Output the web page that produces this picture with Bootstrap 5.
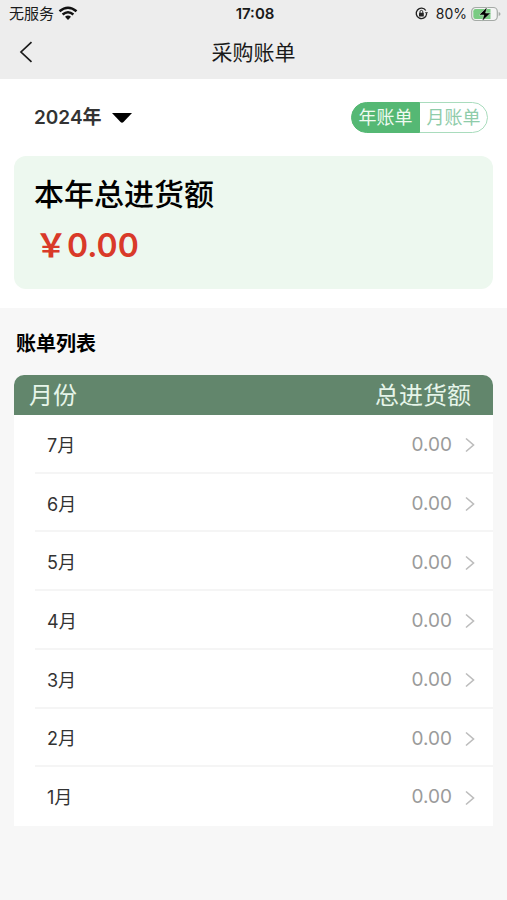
<!DOCTYPE html>
<html lang="zh-CN">
<head>
<meta charset="utf-8">
<meta name="viewport" content="width=device-width, initial-scale=1">
<title>采购账单</title>
<link href="https://cdn.jsdelivr.net/npm/bootstrap@5.3.0/dist/css/bootstrap.min.css" rel="stylesheet">
<style>
  body { font-family: Inter, "Noto Sans CJK SC", sans-serif; background: #f7f7f7; color: #000; }
  .topbar { background: #ededed; color: #1a1a1a; }
  .status { height: 27px; font-size: 14px; line-height: 27px; padding: 0 6px 0 9px; }
  .carrier, .clock { font-size: 15px; }
  .titlebar { height: 52px; padding: 0 18px; }
  .titlebar h1 { font-size: 21px; line-height: 50px; font-weight: 400; }
  .side { flex: 1 1 0; }
  .summary { padding: 23px 14px 19px; }
  .filters { padding: 0 5px 0 20px; margin-bottom: 23px; }
  .year {
    width: auto; padding: 1px 30px 0 0; border: 0; font-size: 19px; line-height: 30px; font-weight: 600; color: #333; background-color: transparent;
    background-image: url("data:image/svg+xml,%3Csvg xmlns='http://www.w3.org/2000/svg' viewBox='0 0 20 10'%3E%3Cpath d='M0 0h20l-8.5 9q-1.500 1.500-3 0z'/%3E%3C/svg%3E");
    background-size: 20px 10px; background-position: right center;
  }
  .switcher .btn {
    --bs-btn-color: #8fccaa; --bs-btn-border-color: #a9dcbd; --bs-btn-active-bg: #55b874; --bs-btn-active-border-color: #55b874; --bs-btn-active-color: #effaf1;
    width: 69px; padding: 0; font-size: 18px; line-height: 29px; font-weight: 400;
  }
  .total { background: #edf8ef; border-radius: 12px; padding: 16px 20px 19px; }
  .total h2 { font-size: 30px; line-height: 44px; font-weight: 500; }
  .total p { font-size: 32px; line-height: 48px; font-weight: 600; color: #d93a29; padding: 6px 0 0 1px; }
  .bills { padding: 21px 14px; }
  .bills h2 { font-size: 20px; line-height: 30px; font-weight: 600; padding-left: 2px; margin-bottom: 16px; }
  .bill-table { height: 451px; background: #fff; border-radius: 10px 10px 0 0; overflow: hidden; }
  .bill-table thead th { height: 40px; background: #62866c; color: #e6f5e9; font-size: 24px; line-height: 38px; font-weight: 400; padding: 2px 22px 0 15px; }
  .bill-table tbody th { font-size: 18px; font-weight: 400; color: #333; padding: 2px 0 0 33px; }
  .bill-table tbody td { padding: 2px 17px 0 0; }
  .bill-table tbody tr:not(:last-child) > * { background: linear-gradient(#f5f5f5, #f5f5f5) right bottom / 100% 2px no-repeat; }
  .bill-table tbody tr:not(:last-child) > th { background-size: calc(100% - 21px) 2px; }
  .amount { gap: 12px; font-size: 19px; color: #9b9b9b; }
</style>
<script src="https://cdn.jsdelivr.net/npm/bootstrap@5.3.0/dist/js/bootstrap.bundle.min.js"></script>
</head>
<body>
<header class="topbar">
  <div class="status d-flex align-items-center">
    <div class="side d-flex align-items-center gap-1">
      <span class="carrier">无服务</span>
      <svg width="20" height="15" viewBox="0 0 20 15" fill="none" stroke="#111" stroke-width="2.500" aria-hidden="true"><path d="M1.500 5.300Q10-1.800 18.500 5.300M4.600 8.500Q10 4 15.400 8.500"/><path d="M7 10.800q3-2.400 6 0l-3 3.200z" fill="#111" stroke="none"/></svg>
    </div>
    <span class="clock fw-semibold">17:08</span>
    <div class="side d-flex align-items-center justify-content-end">
      <svg class="me-2" width="13" height="13" viewBox="0 0 13 13" fill="none" stroke="#222" aria-hidden="true"><path d="M10.800 3.500A5.200 5.200 0 1 0 11.600 7" stroke-width="1.300"/><path d="M9.900 5.200h3.100l-1.500 2.400z" fill="#222" stroke="none"/><rect x="4" y="5.800" width="4.800" height="3.700" rx=".6" fill="#222" stroke="none"/><path d="M5 6V4.800a1.400 1.400 0 0 1 2.800 0V6"/></svg>
      <span class="me-1">80%</span>
      <svg width="30" height="16" viewBox="0 0 30 16" aria-hidden="true"><rect x=".7" y="1.500" width="25.600" height="13" rx="4" fill="#f4f4f4" stroke="#a5aaa6" stroke-width="1.200"/><path d="M4.500 3h15v10h-15Q2.300 13 2.300 10.800V5.200Q2.300 3 4.500 3z" fill="#7acb83"/><path d="M27.700 6v4q1.800-.4 1.800-2t-1.800-2z" fill="#a5aaa6"/><path d="M16.200 1 8 9h4.800l-1.700 6.200L19.600 7h-5z" fill="#000" stroke="#e3f3e4" stroke-width=".5"/></svg>
    </div>
  </div>
  <nav class="titlebar d-flex align-items-center" aria-label="页面">
    <div class="side"><a href="#" class="d-inline-flex pt-1" aria-label="返回"><svg width="16" height="22" viewBox="0 0 16 22" fill="none" stroke="#1a1a1a" stroke-width="1.700"><path d="M13.500 1.200 3 11l10.500 9.800"/></svg></a></div>
    <h1 class="m-0">采购账单</h1>
    <div class="side"></div>
  </nav>
</header>
<main>
  <section class="summary bg-white">
    <div class="filters d-flex justify-content-between align-items-center">
      <select class="form-select year" aria-label="年份"><option>2024年</option></select>
      <div class="btn-group switcher" role="group" aria-label="账单类型">
        <input type="radio" class="btn-check" name="period" id="by-year" checked>
        <label class="btn rounded-start-pill" for="by-year">年账单</label>
        <input type="radio" class="btn-check" name="period" id="by-month">
        <label class="btn rounded-end-pill" for="by-month">月账单</label>
      </div>
    </div>
    <div class="total">
      <h2 class="m-0">本年总进货额</h2>
      <p class="m-0">￥0.00</p>
    </div>
  </section>
  <section class="bills">
    <h2>账单列表</h2>
    <table class="bill-table w-100">
      <thead><tr><th scope="col">月份</th><th scope="col" class="text-end">总进货额</th></tr></thead>
      <tbody>
        <tr><th scope="row">7月</th><td><a href="#" class="amount d-flex justify-content-end align-items-center text-decoration-none">0.00<svg width="12" height="16" viewBox="0 0 12 16" fill="none" stroke="#bcbcbc" stroke-width="1.600" aria-hidden="true"><path d="M2 1.500 9.500 8 2 14.500"/></svg></a></td></tr>
        <tr><th scope="row">6月</th><td><a href="#" class="amount d-flex justify-content-end align-items-center text-decoration-none">0.00<svg width="12" height="16" viewBox="0 0 12 16" fill="none" stroke="#bcbcbc" stroke-width="1.600" aria-hidden="true"><path d="M2 1.500 9.500 8 2 14.500"/></svg></a></td></tr>
        <tr><th scope="row">5月</th><td><a href="#" class="amount d-flex justify-content-end align-items-center text-decoration-none">0.00<svg width="12" height="16" viewBox="0 0 12 16" fill="none" stroke="#bcbcbc" stroke-width="1.600" aria-hidden="true"><path d="M2 1.500 9.500 8 2 14.500"/></svg></a></td></tr>
        <tr><th scope="row">4月</th><td><a href="#" class="amount d-flex justify-content-end align-items-center text-decoration-none">0.00<svg width="12" height="16" viewBox="0 0 12 16" fill="none" stroke="#bcbcbc" stroke-width="1.600" aria-hidden="true"><path d="M2 1.500 9.500 8 2 14.500"/></svg></a></td></tr>
        <tr><th scope="row">3月</th><td><a href="#" class="amount d-flex justify-content-end align-items-center text-decoration-none">0.00<svg width="12" height="16" viewBox="0 0 12 16" fill="none" stroke="#bcbcbc" stroke-width="1.600" aria-hidden="true"><path d="M2 1.500 9.500 8 2 14.500"/></svg></a></td></tr>
        <tr><th scope="row">2月</th><td><a href="#" class="amount d-flex justify-content-end align-items-center text-decoration-none">0.00<svg width="12" height="16" viewBox="0 0 12 16" fill="none" stroke="#bcbcbc" stroke-width="1.600" aria-hidden="true"><path d="M2 1.500 9.500 8 2 14.500"/></svg></a></td></tr>
        <tr><th scope="row">1月</th><td><a href="#" class="amount d-flex justify-content-end align-items-center text-decoration-none">0.00<svg width="12" height="16" viewBox="0 0 12 16" fill="none" stroke="#bcbcbc" stroke-width="1.600" aria-hidden="true"><path d="M2 1.500 9.500 8 2 14.500"/></svg></a></td></tr>
      </tbody>
    </table>
  </section>
</main>
</body>
</html>
